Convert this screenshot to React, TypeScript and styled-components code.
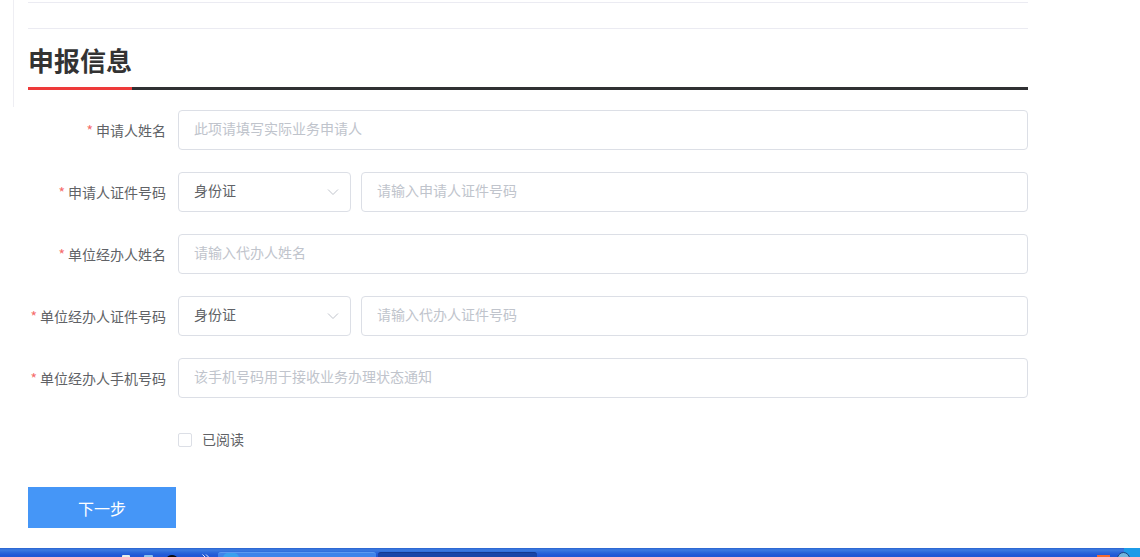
import React from "react";
import styled, { createGlobalStyle } from "styled-components";

const Global = createGlobalStyle`
  html, body { margin: 0; padding: 0; background: #fff; height: 100%; overflow: hidden; }
  body { font-family: "Noto Sans CJK SC", "Liberation Sans", sans-serif; }
  #root { height: 100%; }
  input::placeholder { color: #c0c4cc; opacity: 1; }
`;

const Page = styled.div`
  width: 1140px;
  height: 557px;
  display: flex;
  flex-direction: column;
  overflow: hidden;
`;

const Main = styled.main`
  flex: 1;
  display: flex;
  align-items: flex-start;
  padding-left: 13px;
  min-height: 0;
`;

const SideRule = styled.div`
  flex: none;
  width: 1px;
  height: 107px;
  margin-right: 14px;
  background: #eeeef3;
`;

const Content = styled.div`
  width: 1000px;
  padding-top: 2px;
`;

const TopRule = styled.div`
  height: 1px;
  background: #ebebf2;
  margin-bottom: 25px;
`;

const SectionHead = styled.div`
  border-top: 1px solid #ebebf2;
  border-bottom: 3px solid #303133;
  height: 62px;
  box-sizing: border-box;
`;

const Title = styled.h2`
  margin: 0;
  font-size: 26px;
  line-height: 61px;
  font-weight: 700;
  color: #333;
  height: 61px;
  width: 104px;
  border-bottom: 3px solid #ee3a3a;
  box-sizing: border-box;
  white-space: nowrap;
`;

const Form = styled.form`
  display: flex;
  flex-direction: column;
  gap: 22px;
  margin-top: 20px;
`;

const Row = styled.div`
  display: flex;
  height: 40px;
  align-items: center;
`;

const Label = styled.label`
  width: 138px;
  flex: none;
  text-align: right;
  font-size: 14px;
  line-height: 40px;
  color: #606266;
  white-space: nowrap;
`;

const Star = styled.span`
  color: #f56c6c;
  margin-right: 3px;
  font-size: 14px;
`;

const Fields = styled.div`
  display: flex;
  flex: 1;
  gap: 10px;
  margin-left: 12px;
  height: 40px;
`;

const Input = styled.input`
  flex: 1;
  min-width: 0;
  box-sizing: border-box;
  height: 40px;
  border: 1px solid #dcdfe6;
  border-radius: 4px;
  padding: 0 15px 5px 15px;
  font: inherit;
  font-size: 14px;
  color: #606266;
  outline: none;
  background: #fff;
`;

const Select = styled.div`
  width: 173px;
  flex: none;
  box-sizing: border-box;
  height: 40px;
  border: 1px solid #dcdfe6;
  border-radius: 4px;
  padding: 0 11px 5px 15px;
  display: flex;
  align-items: center;
  justify-content: space-between;
  font-size: 14px;
  color: #606266;
`;

const ChevronSvg = styled.svg`
  margin-top: 5px;
`;

const Chevron = () => (
  <ChevronSvg width="12" height="12" viewBox="0 0 12 12" fill="none" stroke="#c0c4cc" strokeWidth="1">
    <path d="M1 3.5 L6 8.5 L11 3.5" />
  </ChevronSvg>
);

const CheckRow = styled.div`
  display: flex;
  align-items: center;
  height: 40px;
  margin-left: 150px;
  gap: 10px;
  font-size: 14px;
  color: #606266;
`;

const CheckText = styled.span`
  margin-top: -2px;
`;

const Box = styled.span`
  width: 14px;
  height: 14px;
  box-sizing: border-box;
  border: 1px solid #dcdfe6;
  border-radius: 2px;
  background: #fff;
`;

const NextButton = styled.button`
  display: block;
  width: 148px;
  height: 41px;
  margin-top: 27px;
  border: 0;
  padding: 0;
  background: #4596f7;
  color: #fff;
  font: inherit;
  font-size: 16px;
`;

const Taskbar = styled.div`
  flex: none;
  height: 9px;
  display: flex;
  align-items: flex-start;
  background: linear-gradient(#2a63cf 0, #3d7be0 2px, #2e6cdc 4px, #2159d6 7px, #2158d4 100%);
  overflow: hidden;
`;

const QuickLaunch = styled.div`
  display: flex;
  align-items: flex-start;
  gap: 14px;
  padding-left: 122px;
  padding-top: 7px;
`;

const LaunchIcon = styled.div<{ $width: number; $color: string; $round?: boolean }>`
  flex: none;
  width: ${(p) => p.$width}px;
  height: 6px;
  border-radius: ${(p) => (p.$round ? "50% 50% 0 0" : "1px 1px 0 0")};
  background: ${(p) => p.$color};
`;

const MoreSvg = styled.svg`
  flex: none;
  margin: -1px 0 0 11px;
`;

const MoreIcon = () => (
  <MoreSvg width="7" height="6" viewBox="0 0 7 6" fill="none" stroke="#dfe9fb" strokeWidth="1">
    <path d="M0.5 0.5 L3 3 L0.5 5.5 M4 0.5 L6.5 3 L4 5.5" />
  </MoreSvg>
);

const Tasks = styled.div`
  display: flex;
  gap: 2px;
  margin-left: 9px;
  padding-top: 4px;
`;

const TaskButton = styled.div<{ $active?: boolean; $width: number }>`
  flex: none;
  width: ${(p) => p.$width}px;
  height: 10px;
  box-sizing: border-box;
  padding: 0 0 0 5px;
  border-radius: 3px 3px 0 0;
  background: ${(p) => (p.$active ? "#1a46a8" : "#3f84ea")};
  border-top: 1px solid ${(p) => (p.$active ? "#143a90" : "#5c9af0")};
`;

const AppIcon = styled.div`
  width: 16px;
  height: 10px;
  border-radius: 5px 5px 0 0;
  background: #3aa0ee;
`;

const Tray = styled.div`
  display: flex;
  align-items: flex-start;
  gap: 7px;
  margin-left: auto;
`;

const OrangeTray = styled.div`
  flex: none;
  width: 13px;
  height: 6px;
  margin-top: 7px;
  background: #f26a30;
`;

const Dome = styled.div`
  flex: none;
  width: 13px;
  height: 13px;
  margin-top: 4px;
  border-radius: 50%;
  background: #6fb4dc;
  border: 1px solid #173f7e;
  box-sizing: border-box;
  position: relative;
  z-index: 1;
`;

const Corner = styled.div`
  flex: none;
  width: 16px;
  height: 9px;
  margin-left: -13px;
  background: #1c9be8;
`;

const fields = [
  { label: "申请人姓名", ph: "此项请填写实际业务申请人" },
  { label: "申请人证件号码", ph: "请输入申请人证件号码", select: true },
  { label: "单位经办人姓名", ph: "请输入代办人姓名" },
  { label: "单位经办人证件号码", ph: "请输入代办人证件号码", select: true },
  { label: "单位经办人手机号码", ph: "该手机号码用于接收业务办理状态通知" },
];

export default function App() {
  return (
    <Page>
      <Global />
      <Main>
        <SideRule />
        <Content>
          <TopRule />
          <SectionHead>
            <Title>申报信息</Title>
          </SectionHead>
          <Form>
            {fields.map((f) => (
              <Row key={f.label}>
                <Label>
                  <Star>*</Star>
                  {f.label}
                </Label>
                <Fields>
                  {f.select && (
                    <Select>
                      身份证
                      <Chevron />
                    </Select>
                  )}
                  <Input placeholder={f.ph} />
                </Fields>
              </Row>
            ))}
            <CheckRow>
              <Box />
              <CheckText>已阅读</CheckText>
            </CheckRow>
          </Form>
          <NextButton type="button">下一步</NextButton>
        </Content>
      </Main>
      <Taskbar>
        <QuickLaunch>
          <LaunchIcon $width={8} $color="#e8efe8" />
          <LaunchIcon $width={9} $color="#8fc4ee" />
          <LaunchIcon $width={10} $color="#0c0c0c" $round />
          <MoreIcon />
        </QuickLaunch>
        <Tasks>
          <TaskButton $width={158}>
            <AppIcon />
          </TaskButton>
          <TaskButton $active $width={159} />
        </Tasks>
        <Tray>
          <OrangeTray />
          <Dome />
          <Corner />
        </Tray>
      </Taskbar>
    </Page>
  );
}
